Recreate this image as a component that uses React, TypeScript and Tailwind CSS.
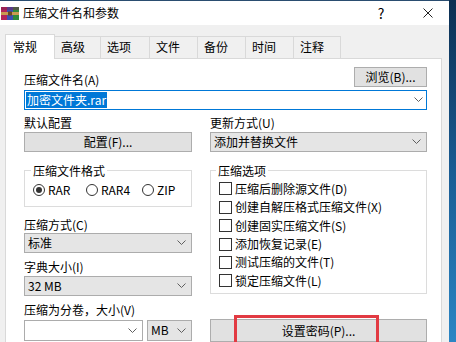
import React from "react";

const Chevron = () => (
  <svg width="9" height="5" viewBox="0 0 9 5" className="shrink-0">
    <path d="M0.5 0.5 4.5 4.5 8.5 0.5" fill="none" stroke="#5f5f5f" strokeWidth="1" />
  </svg>
);

function DropList({ value, className = "" }: { value: string; className?: string }) {
  return (
    <div
      className={`flex h-[20px] items-center justify-between border border-[#acacac] bg-[#e5e5e5] pl-[3px] pr-[5px] ${className}`}
    >
      <span>{value}</span>
      <Chevron />
    </div>
  );
}

function Radio({ label, checked, className = "" }: { label: string; checked?: boolean; className?: string }) {
  return (
    <div className={`flex items-center gap-[3px] ${className}`}>
      <div className="flex h-[12px] w-[12px] items-center justify-center rounded-full border border-[#333] bg-white">
        {checked && <div className="h-[6px] w-[6px] rounded-full bg-[#333]" />}
      </div>
      <span>{label}</span>
    </div>
  );
}

const tabs = [
  { label: "高级", w: "w-[46px]" },
  { label: "选项", w: "w-[49px]" },
  { label: "文件", w: "w-[48px]" },
  { label: "备份", w: "w-[48px]" },
  { label: "时间", w: "w-[48px]" },
  { label: "注释", w: "w-[47px]" },
];

const options = [
  "压缩后删除源文件(D)",
  "创建自解压格式压缩文件(X)",
  "创建固实压缩文件(S)",
  "添加恢复记录(E)",
  "测试压缩的文件(T)",
  "锁定压缩文件(L)",
];

function RarIcon() {
  return (
    <svg width="18" height="13" viewBox="0 0 18 13">
      <rect x="0" y="0" width="6" height="13" fill="#b3245a" />
      <rect x="6" y="0" width="6" height="13" fill="#3d4fb5" />
      <rect x="12" y="0" width="6" height="13" fill="#2f8a3c" />
      <rect x="0" y="0" width="18" height="3" fill="#7a1f4e" opacity="0.45" />
      <rect x="0" y="5" width="18" height="3" fill="#c99a52" />
      <rect x="7" y="4.5" width="4" height="4" fill="#6b4a1f" />
    </svg>
  );
}

export default function App() {
  return (
    <div className="flex h-[342px] w-[456px] overflow-hidden bg-[#f0f0f0] font-['Noto_Sans_CJK_SC','Liberation_Sans',sans-serif] text-[12px] leading-[14px] text-black">
      <div className="flex w-[449px] flex-col">
        <div className="h-px bg-[#2a4d70]" />
        {/* title bar */}
        <div className="flex h-[25px] items-center bg-white">
          <div className="ml-[1px] mt-[1px]">
            <RarIcon />
          </div>
          <span className="ml-[4px]">压缩文件名和参数</span>
          <div className="flex-1" />
          <span className="mr-[35px] w-[14px] text-center text-[14px]">?</span>
          <svg width="10" height="10" viewBox="0 0 10 10" className="mr-[16px]">
            <path d="M0.5 0.5 9.5 9.5 M9.5 0.5 0.5 9.5" stroke="#222" strokeWidth="1" />
          </svg>
        </div>

        <div className="flex flex-1 flex-col pl-[5px] pr-[7px] pt-[9px]">
          {/* tabs */}
          <div className="flex h-[24px] items-end">
            <div className="relative z-10 -mb-px flex h-[25px] w-[50px] items-center border border-b-0 border-[#d9d9d9] bg-white pl-[7px]">
              常规
            </div>
            {tabs.map((t) => (
              <div
                key={t.label}
                className={`flex h-[22px] ${t.w} items-center border border-b-0 border-l-0 border-[#d9d9d9] pl-[6px]`}
              >
                {t.label}
              </div>
            ))}
          </div>

          {/* panel */}
          <div className="flex-1 border border-b-0 border-[#d9d9d9] bg-white pl-[18px] pr-[14px] pt-[8px]">
            <div className="flex h-[20px] items-end justify-between">
              <span>压缩文件名(A)</span>
              <div className="flex h-[20px] w-[73px] items-center justify-center border border-[#adadad] bg-[#e1e1e1]">
                浏览(B)...
              </div>
            </div>
            <div className="mt-[3px] flex h-[20px] items-center justify-between border border-[#0078d7] bg-white pl-[1px] pr-[3px]">
              <span className="bg-[#0078d7] px-[1px] leading-[16px] text-white">加密文件夹.rar</span>
              <Chevron />
            </div>

            <div className="grid grid-cols-[168px_217px] gap-x-[18px]">
              {/* left column */}
              <div className="flex flex-col">
                <span className="mt-[6px]">默认配置</span>
                <div className="mt-[2px] flex h-[20px] items-center justify-center border border-[#adadad] bg-[#e1e1e1]">
                  配置(F)...
                </div>
                <fieldset className="mt-[12px] border border-[#dcdcdc] pb-[9px] pt-[5px]">
                  <legend className="ml-[6px] px-[2px]">压缩文件格式</legend>
                  <div className="flex h-[14px] items-center pl-[8px]">
                    <Radio label="RAR" checked className="w-[53px]" />
                    <Radio label="RAR4" className="w-[56px]" />
                    <Radio label="ZIP" />
                  </div>
                </fieldset>
                <span className="mt-[11px]">压缩方式(C)</span>
                <DropList value="标准" className="mt-[1px]" />
                <span className="mt-[7px]">字典大小(I)</span>
                <DropList value="32 MB" className="mt-[2px]" />
                <span className="mt-[7px]">压缩为分卷，大小(V)</span>
                <div className="mt-[3px] flex h-[21px] gap-[4px]">
                  <div className="flex w-[119px] items-center justify-end border border-[#acacac] bg-white pr-[5px]">
                    <Chevron />
                  </div>
                  <DropList value="MB" className="h-[21px] flex-1" />
                </div>
              </div>

              {/* right column */}
              <div className="flex flex-col">
                <span className="mt-[6px]">更新方式(U)</span>
                <DropList value="添加并替换文件" className="mt-[2px] pr-[3px]" />
                <fieldset className="mt-[12px] border border-[#dcdcdc] pb-[3px] pt-[2px]">
                  <legend className="ml-[5px] px-[2px]">压缩选项</legend>
                  {options.map((o) => (
                    <div key={o} className="flex h-[18.4px] items-center gap-[3px] pl-[8px]">
                      <div className="h-[13px] w-[13px] border border-[#333] bg-white" />
                      <span>{o}</span>
                    </div>
                  ))}
                </fieldset>
                <div className="relative mt-[25px] flex h-[23px] items-center justify-center border border-[#adadad] bg-[#e1e1e1]">
                  设置密码(P)...
                  <div className="absolute -top-[5px] left-[23px] h-[40px] w-[145px] border-[3px] border-[#e23a42]" />
                </div>
              </div>
            </div>
          </div>
        </div>
      </div>
      <div className="flex-1 bg-gradient-to-b from-[#0c2f52] via-[#1a5c93] to-[#2b86c4]" />
    </div>
  );
}
